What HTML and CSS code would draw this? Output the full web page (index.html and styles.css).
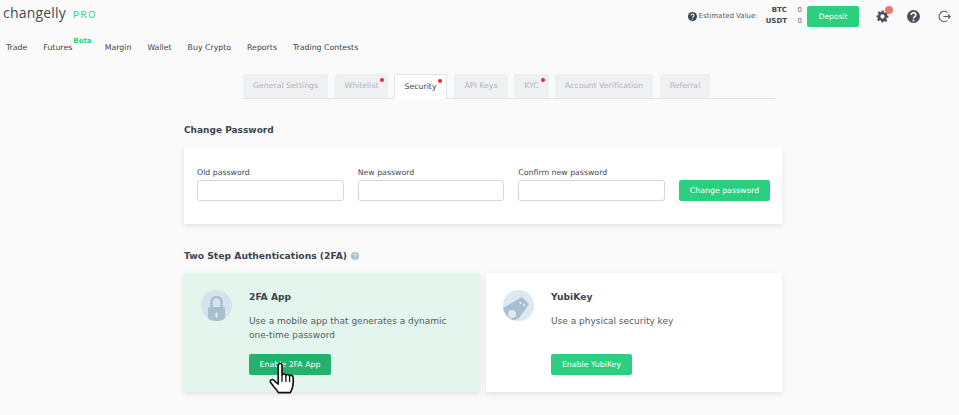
FILE: index.html
```html
<!DOCTYPE html>
<html lang="en">
<head>
    <meta charset="UTF-8">
    <meta name="viewport" content="width=device-width, initial-scale=1.0">
    <title>Changelly PRO - Security</title>
    <link rel="stylesheet" href="styles.css">
</head>
<body>
    <header class="top-bar">
        <div class="logo">changelly<span class="logo-pro">PRO</span></div>
        <div class="top-right">
            <svg class="est-icon" width="9" height="9" viewBox="0 0 16 16"><circle cx="8" cy="8" r="8" fill="#3d4450"/><path d="M5.400 6.200a2.600 2.600 0 1 1 3.900 2.200c-.9.500-1.300.9-1.300 1.800" fill="none" stroke="#fff" stroke-width="1.800"/><circle cx="8" cy="12.600" r="1.100" fill="#fff"/></svg>
            <span class="est-label">Estimated Value:</span>
            <div class="balances">
                <div class="balance-row"><b>BTC</b><span>0</span></div>
                <div class="balance-row"><b>USDT</b><span>0</span></div>
            </div>
            <button class="btn btn-deposit" type="button">Deposit</button>
            <div class="top-icons">
                <span class="icon-gear">
                    <svg width="13" height="13" viewBox="0 0 24 24"><path fill="#4a505b" fill-rule="evenodd" d="M10 1h4l.6 3.200 1.900.8 2.700-1.800 2.800 2.800-1.800 2.700.8 1.900L23 10v4l-3.200.6-.8 1.900 1.800 2.700-2.800 2.800-2.700-1.800-1.900.8L14 23h-4l-.5-3.200-1.900-.8-2.700 1.800-2.800-2.800 1.800-2.700-.8-1.900L1 14v-4l3.100-.5.8-1.900L3.100 5l2.800-2.800 2.700 1.800 1.900-.8zM12 8a4 4 0 1 0 0 8 4 4 0 0 0 0-8z"/></svg>
                    <i class="gear-badge"></i>
                </span>
                <svg width="13" height="13" viewBox="0 0 16 16"><circle cx="8" cy="8" r="8" fill="#4a505b"/><path d="M5.200 6.100a2.800 2.800 0 1 1 4.200 2.400c-1 .6-1.400 1-1.400 2" fill="none" stroke="#fff" stroke-width="2"/><circle cx="8" cy="13" r="1.200" fill="#fff"/></svg>
                <svg width="13" height="13" viewBox="0 0 16 16" fill="none" stroke="#5a606a" stroke-width="1.500"><path d="M11.500 3.200A6.200 6.200 0 1 0 11.500 12.800"/><path d="M6.500 8H15M12.500 5.500 15 8l-2.500 2.500"/></svg>
            </div>
        </div>
    </header>

    <nav class="main-nav">
        <a>Trade</a>
        <a class="has-beta">Futures<span class="beta">Beta</span></a>
        <a>Margin</a>
        <a>Wallet</a>
        <a>Buy Crypto</a>
        <a>Reports</a>
        <a>Trading Contests</a>
    </nav>

    <main class="content">
        <div class="tabs">
            <a class="tab tab-general">General Settings</a>
            <a class="tab tab-whitelist dot">Whitelist</a>
            <a class="tab tab-security active dot">Security</a>
            <a class="tab tab-api">API Keys</a>
            <a class="tab tab-kyc dot">KYC</a>
            <a class="tab tab-account">Account Verification</a>
            <a class="tab tab-referral">Referral</a>
        </div>

        <h2 class="section-title title-password">Change Password</h2>
        <form class="card password-card">
            <div class="field">
                <label for="old">Old password</label>
                <input id="old" type="password">
            </div>
            <div class="field">
                <label for="new">New password</label>
                <input id="new" type="password">
            </div>
            <div class="field">
                <label for="confirm">Confirm new password</label>
                <input id="confirm" type="password">
            </div>
            <button class="btn btn-change" type="button">Change password</button>
        </form>

        <h2 class="section-title title-2fa">Two Step Authentications (2FA)
            <svg width="8" height="8" viewBox="0 0 16 16"><circle cx="8" cy="8" r="8" fill="#a9bfd0"/><path d="M5.600 6.300a2.500 2.500 0 1 1 3.700 2.100c-.9.500-1.300.9-1.300 1.700" fill="none" stroke="#fff" stroke-width="1.600"/><circle cx="8" cy="12.500" r="1" fill="#fff"/></svg>
        </h2>
        <div class="methods">
            <div class="card method method-active">
                <div class="method-icon">
                    <svg width="31" height="31" viewBox="0 0 31 31"><path d="M10.500 18v-6a5 5 0 0 1 10 0v6" fill="none" stroke="#a9bfd0" stroke-width="2.600"/><rect x="7" y="17" width="17" height="14" rx="1.500" fill="#a9bfd0"/><path d="M15.500 23.500v3" stroke="#e3eef0" stroke-width="2" stroke-linecap="round"/></svg>
                </div>
                <div class="method-body">
                    <h3>2FA App</h3>
                    <p>Use a mobile app that generates a dynamic one-time password</p>
                    <button class="btn btn-enable-dark" type="button">Enable 2FA App</button>
                </div>
                <svg class="cursor-hand" width="26" height="33" viewBox="0 0 24 30"><path d="M8.500 3c0-2.400 3.500-2.400 3.500 0v9c.4-1.600 3.300-1.600 3.600.3.400-1.500 3.100-1.400 3.400.5.500-1.200 3-1 3.200.8.400 3.500.3 7-.6 10-.5 1.800-1.300 3-1.900 4.400H8.500c-.6-1.800-2-3.100-3.600-4.900L1.500 18.800c-1.300-1.900 1-3.700 2.700-2.300l4.300 3.600z" fill="#fff" stroke="#111" stroke-width="1.500" stroke-linejoin="round"/><path d="M12 12v6M15.600 12.300v6M19 12.800v5.500" stroke="#111" stroke-width="1.200"/></svg>
            </div>
            <div class="card method">
                <div class="method-icon icon-key">
                    <svg width="31" height="31" viewBox="0 0 31 31"><path fill="#a9bfd0" fill-rule="evenodd" d="M19 7l7 7-10 14-8 4-8-4V18zM9 20a4 4 0 1 0 0 8 4 4 0 0 0 0-8zM17.500 11.500l-1.500 1 1.500 2 1.500-1zM21 13.500l-1.500 1 1.500 2 1.500-1z"/></svg>
                </div>
                <div class="method-body">
                    <h3>YubiKey</h3>
                    <p>Use a physical security key</p>
                    <button class="btn btn-enable" type="button">Enable YubiKey</button>
                </div>
            </div>
        </div>
    </main>
</body>
</html>
```

FILE: styles.css
```css
/* Global Styles */
* {
    margin: 0;
    padding: 0;
    box-sizing: border-box;
}
body {
    font-family: 'DejaVu Sans', Verdana, sans-serif;
    font-size: 7.8px;
    color: #3d4450;
    background: #fafafa;
    height: 415px;
    overflow: hidden;
}
a {
    color: inherit;
    text-decoration: none;
}

/* Header */
.top-bar {
    height: 34px;
    display: flex;
    justify-content: space-between;
    padding: 3px 8px 0 3px;
}
.logo {
    font-family: 'Open Sans', sans-serif;
    font-size: 14px;
    letter-spacing: 0.2px;
    line-height: 20px;
    color: #444a52;
}
.logo-pro {
    font-family: 'Inter', sans-serif;
    font-size: 9.500px;
    letter-spacing: 1.500px;
    color: #2ad07f;
    margin-left: 7px;
}
.top-right {
    display: flex;
    align-items: center;
    height: 26px;
}
.est-icon {
    margin-right: 2px;
}
.est-label {
    font-size: 7px;
    color: #555b64;
    margin-right: 8px;
}
.balances {
    margin-right: 5px;
    font-size: 7px;
}
.balance-row {
    display: flex;
    justify-content: flex-end;
    line-height: 11px;
}
.balance-row b {
    color: #444a52;
}
.balance-row span {
    width: 15px;
    text-align: right;
    color: #666;
}
.btn {
    border: none;
    border-radius: 2px;
    background: #2ad07f;
    color: #fff;
    font-family: inherit;
    font-size: 7.8px;
    height: 21px;
}
.btn-deposit {
    width: 52px;
    font-size: 7.500px;
}
.top-icons {
    display: flex;
    align-items: center;
    gap: 18px;
    margin-left: 17px;
}
.icon-gear {
    position: relative;
    display: flex;
}
.gear-badge {
    position: absolute;
    top: -4px;
    right: -4px;
    width: 8px;
    height: 8px;
    border-radius: 50%;
    background: #ec7a6f;
}

/* Nav */
.main-nav {
    display: flex;
    gap: 16px;
    padding: 8px 0 0 6px;
    height: 40px;
    line-height: 12px;
}
.has-beta {
    position: relative;
    margin-right: 16.500px;
}
.beta {
    position: absolute;
    top: -7px;
    left: 30px;
    font-size: 7px;
    font-weight: bold;
    color: #2ad07f;
}

/* Tabs */
.content {
    width: 598px;
    margin-left: 184px;
}
.tabs {
    display: flex;
    margin-left: 59px;
    width: 532px;
    height: 25px;
    border-bottom: 1px solid #dde6ea;
}
.tab {
    position: relative;
    height: 24px;
    line-height: 24px;
    text-align: center;
    background: #eff0f2;
    color: #b3b5b9;
    border-radius: 2px 2px 0 0;
    margin-right: 6px;
}
.tab-general { width: 85px; margin-right: 7px; }
.tab-whitelist { width: 53px; }
.tab-security { width: 53px; margin-right: 7px; }
.tab-api { width: 54px; }
.tab-kyc { width: 35px; }
.tab-account { width: 98px; margin-right: 7px; }
.tab-referral { width: 50px; margin-right: 0; }
.tab.active {
    height: 25px;
    background: #fff;
    color: #3d4450;
    border: 1px solid #dde6ea;
    border-bottom: none;
}
.tab.dot::after {
    content: "";
    position: absolute;
    top: 4px;
    right: 4px;
    width: 4px;
    height: 4px;
    border-radius: 50%;
    background: #f5222d;
}

/* Sections */
.section-title {
    font-size: 9.200px;
    font-weight: bold;
    color: #3d4450;
    line-height: 12px;
}
.title-password {
    margin-top: 25px;
    font-size: 9px;
}
.title-2fa {
    margin-top: 26px;
    display: flex;
    align-items: center;
    gap: 4px;
}
.card {
    background: #fff;
    box-shadow: 0 2px 5px rgba(0, 0, 0, 0.1);
}
.password-card {
    display: flex;
    align-items: flex-end;
    gap: 14px;
    height: 77px;
    margin-top: 11px;
    padding: 20px 12px 23px 13px;
}
.field {
    flex: 1;
}
.field label {
    display: block;
    line-height: 12px;
    color: #444a52;
    margin-bottom: 1px;
}
.field input {
    display: block;
    width: 100%;
    height: 21px;
    border: 1px solid #ccdbe3;
    border-radius: 3px;
    background: #fff;
}
.btn-change {
    flex: none;
    width: 91px;
}

/* 2FA methods */
.methods {
    display: flex;
    gap: 6px;
    margin-top: 11px;
}
.method {
    position: relative;
    flex: 1;
    height: 119px;
    display: flex;
    gap: 17px;
    padding: 17px 17px 0;
}
.method-active {
    background: #e4f5ed;
}
.method-icon {
    flex: none;
    width: 31px;
    height: 31px;
    border-radius: 50%;
    background: #d5e4ea;
    overflow: hidden;
}
.icon-key {
    background: #dfe8ee;
}
.method-body {
    display: flex;
    flex-direction: column;
    align-items: flex-start;
}
.method-body h3 {
    font-size: 9.200px;
    font-weight: bold;
    line-height: 14px;
    color: #3d4450;
}
.method-body p {
    font-size: 9px;
    line-height: 14px;
    height: 28px;
    margin-top: 10px;
    color: #555b66;
}
.btn-enable,
.btn-enable-dark {
    margin-top: 12px;
}
.btn-enable {
    width: 81px;
}
.btn-enable-dark {
    width: 82px;
    background: #23b26d;
}
.cursor-hand {
    position: absolute;
    left: 85px;
    top: 89px;
}
```
